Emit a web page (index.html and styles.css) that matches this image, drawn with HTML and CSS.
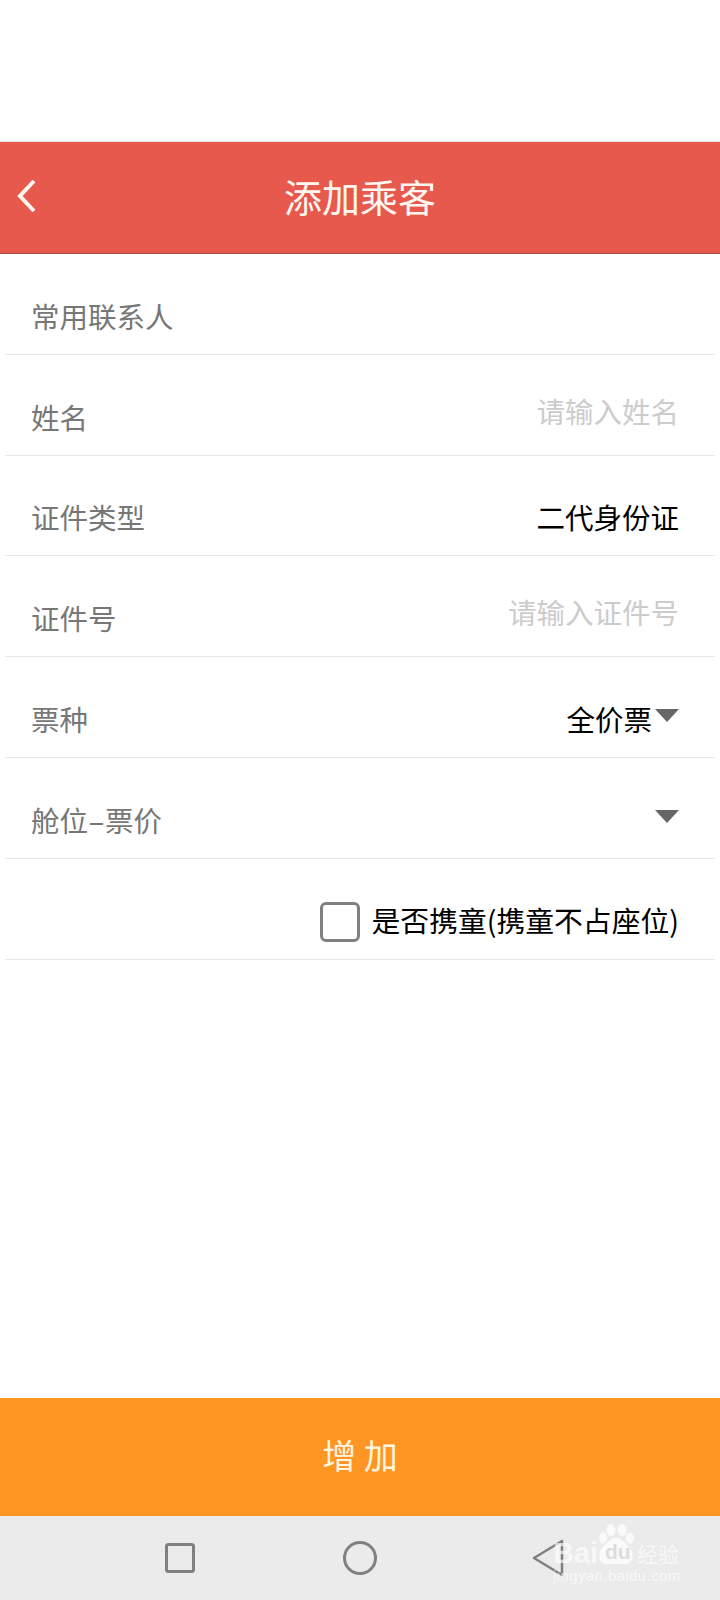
FILE: index.html
```html
<!DOCTYPE html>
<html lang="zh-CN">
<head>
    <meta charset="UTF-8">
    <meta name="viewport" content="width=device-width, initial-scale=1.0">
    <title>添加乘客</title>
    <link rel="stylesheet" href="styles.css">
</head>
<body>
    <div class="screen">
        <div class="topSpace"></div>
        <header class="titleBar">
            <svg class="backIcon" width="24" height="36" viewBox="0 0 24 36">
                <path d="M20 3 L6 18 L20 33" fill="none" stroke="#fff6f0" stroke-width="4"/>
            </svg>
            <h1>添加乘客</h1>
        </header>

        <div class="form">
            <div class="row"><span class="label">常用联系人</span></div>
            <div class="row">
                <span class="label">姓名</span>
                <span class="hint">请输入姓名</span>
            </div>
            <div class="row">
                <span class="label">证件类型</span>
                <span class="value">二代身份证</span>
            </div>
            <div class="row">
                <span class="label">证件号</span>
                <span class="hint">请输入证件号</span>
            </div>
            <div class="row">
                <span class="label">票种</span>
                <span class="value">全价票<i class="arrow"></i></span>
            </div>
            <div class="row">
                <span class="label">舱位<span class="dash">-</span>票价</span>
                <i class="arrow arrowAlone"></i>
            </div>
            <div class="row rowCheck">
                <i class="checkBox"></i>
                <span class="value">是否携童(携童不占座位)</span>
            </div>
        </div>

        <button class="addButton">增 加</button>

        <nav class="navBar">
            <svg width="32" height="32" viewBox="0 0 32 32">
                <rect x="2.5" y="2.5" width="27" height="27" rx="2" fill="none" stroke="#808080" stroke-width="3"/>
            </svg>
            <svg width="36" height="36" viewBox="0 0 36 36">
                <circle cx="18" cy="18" r="15.5" fill="none" stroke="#808080" stroke-width="3"/>
            </svg>
            <svg class="navBack" width="32" height="38" viewBox="0 0 32 38">
                <path d="M30 2 L2 19 L30 36 Z" fill="none" stroke="#808080" stroke-width="2.5" stroke-linejoin="round"/>
            </svg>
        </nav>

        <div class="watermark">
            <div class="markTop">
                <span class="markBai">Bai</span>
                <div class="markPaw">
                    <svg width="38" height="42" viewBox="0 0 38 42">
                        <ellipse cx="6" cy="14" rx="4" ry="5.5" fill="#fff"/>
                        <ellipse cx="14" cy="6" rx="4.5" ry="6" fill="#fff"/>
                        <ellipse cx="25" cy="6" rx="4.5" ry="6" fill="#fff"/>
                        <ellipse cx="33" cy="14" rx="4" ry="5.5" fill="#fff"/>
                        <path d="M19 14 C26 14 29 20 33 24 C38 30 36 40 28 40 L10 40 C2 40 0 30 5 24 C9 20 12 14 19 14 Z" fill="#fff"/>
                    </svg>
                    <span class="markDu">du</span>
                </div>
                <span class="markJing">经验</span>
            </div>
            <div class="markUrl">jingyan.baidu.com</div>
        </div>
    </div>
</body>
</html>
```

FILE: styles.css
```css
* {
    box-sizing: border-box;
}

body {
    margin: 0;
    background-color: #fff;
    font-family: "Noto Sans CJK SC", "Liberation Sans", sans-serif;
}

.screen {
    position: relative;
    width: 720px;
    height: 1600px;
    display: flex;
    flex-direction: column;
    overflow: hidden;
}

.topSpace {
    height: 142px;
    border-bottom: 1px solid #e6dcdc;
}

.titleBar {
    height: 112px;
    padding-bottom: 4px;
    background-color: #e6594c;
    border-bottom: 1px solid #a8483f;
    display: flex;
    align-items: center;
    justify-content: center;
    position: relative;
}

.titleBar h1 {
    margin: 0;
    color: #fff6f0;
    font-size: 38px;
    font-weight: 400;
    line-height: 1;
}

.backIcon {
    position: absolute;
    left: 14px;
    top: 36px;
}

.form {
    flex: 1;
    padding: 0 5px;
}

.row {
    height: 100.8px;
    padding: 0 36px 18px 26px;
    border-bottom: 1px solid #e8e8e8;
    display: flex;
    align-items: flex-end;
    justify-content: space-between;
    font-size: 28.5px;
    line-height: 40px;
}

.label {
    color: #777;
}

.dash {
    display: inline-block;
    width: 17px;
    text-align: center;
    transform: scaleX(1.8);
}

.hint {
    color: #ccc;
    margin-bottom: 6px;
}

.value {
    color: #000;
    display: flex;
    align-items: center;
    gap: 3px;
}

.arrow {
    display: block;
    width: 0;
    height: 0;
    border-left: 12px solid transparent;
    border-right: 12px solid transparent;
    border-top: 13px solid #666;
    margin-bottom: 6px;
}

.arrowAlone {
    margin-bottom: 17px;
}

.rowCheck {
    justify-content: flex-end;
    align-items: center;
    padding-top: 26px;
    padding-bottom: 0;
    gap: 12px;
    font-size: 28.8px;
}

.rowCheck .value {
    margin-bottom: 4px;
}

.checkBox {
    display: block;
    width: 40px;
    height: 40px;
    border: 3px solid #808080;
    border-radius: 6px;
}

.addButton {
    height: 118px;
    border: none;
    background-color: #ff9522;
    color: #fff6e0;
    font-family: inherit;
    font-size: 34px;
    padding: 0 0 6px;
}

.navBar {
    height: 84px;
    background-color: #ebebeb;
    display: flex;
    align-items: center;
    justify-content: center;
    padding-right: 1px;
    gap: 146px;
}

.navBack {
    margin-left: 8px;
    margin-right: -9px;
}

.watermark {
    position: absolute;
    left: 553px;
    bottom: 14px;
    width: 130px;
    color: rgba(255, 255, 255, 0.65);
    font-family: "Liberation Sans", "Noto Sans CJK SC", sans-serif;
}

.markTop {
    display: flex;
    align-items: flex-end;
    height: 42px;
    line-height: 26px;
}

.markBai {
    width: 44px;
    font-size: 29px;
    font-weight: 700;
}

.markPaw {
    position: relative;
    width: 38px;
    height: 42px;
    opacity: 0.75;
}

.markDu {
    position: absolute;
    left: 8px;
    bottom: 1px;
    color: #d8d8d8;
    font-size: 21px;
    font-weight: 700;
}

.markJing {
    font-size: 21px;
    margin-left: 2px;
    font-family: "Noto Sans CJK SC", sans-serif;
    white-space: nowrap;
}

.markUrl {
    font-size: 15px;
    letter-spacing: 0.4px;
    white-space: nowrap;
    line-height: 20px;
}
```
